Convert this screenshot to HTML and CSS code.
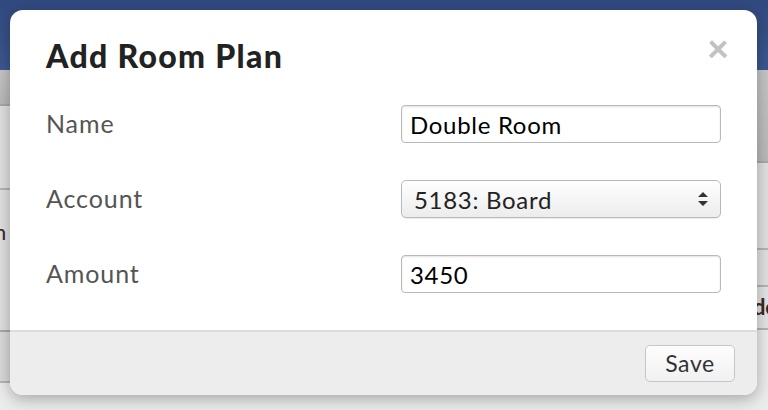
FILE: index.html
```html
<!DOCTYPE html>
<html lang="en">
<head>
  <meta charset="UTF-8">
  <title>Add Room Plan</title>
  <link rel="stylesheet" href="styles.css">
</head>
<body>
  <div class="page">
    <div class="topbar"></div>
    <div class="content">
      <div class="sidebar">
        <div class="toolbar short"></div>
        <div class="row r1"></div>
        <div class="row r2"><span class="cell-text">n</span></div>
        <div class="row r3"></div>
      </div>
      <div class="main">
        <div class="toolbar tall"></div>
        <div class="row m1"></div>
        <div class="row m2"></div>
        <div class="row m3"><span class="cell-text">do</span></div>
      </div>
    </div>
  </div>

  <div class="modal">
    <div class="modal-header">
      <h2>Add Room Plan</h2>
      <span class="close">&times;</span>
    </div>
    <form class="modal-body">
      <label for="name">Name</label>
      <input type="text" id="name" value="Double Room">

      <label for="account">Account</label>
      <div class="select-wrap">
        <select id="account">
          <option>5183: Board</option>
        </select>
        <svg class="arrows" width="12" height="16" viewBox="0 0 12 16">
          <path d="M6 1 L11 6 L1 6 Z M6 15 L11 10 L1 10 Z" fill="#333"/>
        </svg>
      </div>

      <label for="amount">Amount</label>
      <input type="text" id="amount" value="3450">
    </form>
    <div class="modal-footer">
      <button type="button">Save</button>
    </div>
  </div>
</body>
</html>
```

FILE: styles.css
```css
body {
  margin: 0;
  font-family: 'Lato', 'Open Sans', sans-serif;
  width: 768px;
  height: 410px;
  overflow: hidden;
  position: relative;
  background: #ececec;
}
.page {
  height: 410px;
}
.topbar {
  height: 70px;
  background: linear-gradient(#30497f, #3d5891);
}
.content {
  display: flex;
}
.sidebar {
  width: 200px;
}
.main {
  flex: 1;
}
.toolbar {
  background: linear-gradient(#c6c6c6, #b9b9b9);
  border-bottom: 2px solid #a9a9a9;
}
.toolbar.short {
  height: 34px;
}
.toolbar.tall {
  height: 91px;
}
.row {
  background: #e1e1e1;
  border-bottom: 2px solid #b4b4b4;
  position: relative;
}
.r1 { height: 82px; }
.r2 { height: 140px; border-bottom-color: #a8a8a8; }
.r3 { height: 49px; background: #dadada; }
.m1 { height: 85px; }
.m2 { height: 35px; }
.m3 { height: 41px; background: #e4e4e4; }
.cell-text {
  position: absolute;
  font-size: 22px;
  color: #3a2a2a;
}
.sidebar .cell-text {
  top: 28px;
  left: -6px;
}
.main .cell-text {
  top: 6px;
  font-weight: bold;
  right: -10px;
}
.modal {
  position: absolute;
  left: 10px;
  top: 10px;
  width: 747px;
  height: 385px;
  background: #fff;
  border-radius: 13px;
  box-shadow: 0 4px 16px rgba(0, 0, 0, 0.3);
  display: flex;
  flex-direction: column;
  overflow: hidden;
}
.modal-header {
  display: flex;
  justify-content: space-between;
  align-items: flex-start;
  padding: 26px 28px 0 36px;
}
.modal-header h2 {
  margin: 0;
  font-size: 32px;
  line-height: 40px;
  font-weight: 900;
  letter-spacing: 1.3px;
  color: #222;
}
.close {
  font-size: 38px;
  line-height: 24px;
  font-weight: 900;
  color: #c2c2c2;
  margin-top: -1px;
}
.modal-body {
  flex: 1;
  display: grid;
  grid-template-columns: 1fr 320px;
  grid-auto-rows: 38px;
  row-gap: 37px;
  align-items: center;
  padding: 29px 36px 0 36px;
}
label {
  font-size: 25px;
  letter-spacing: 0.9px;
  color: #555;
  margin-top: -3px;
}
input, select {
  box-sizing: border-box;
  width: 320px;
  height: 38px;
  font-family: 'Lato', 'Open Sans', sans-serif;
  font-size: 24px;
  letter-spacing: 0.7px;
  color: #000;
  border: 1px solid #b9b9b9;
  border-radius: 4px;
  padding: 0 8px;
  margin: 0;
  box-shadow: inset 0 1px 2px rgba(0, 0, 0, 0.12);
  outline: none;
}
.select-wrap {
  position: relative;
  height: 38px;
}
select {
  appearance: none;
  -webkit-appearance: none;
  background: linear-gradient(#ffffff, #ececec);
  border-radius: 5px;
  padding: 0 12px;
  color: #222;
  box-shadow: 0 1px 1px rgba(0, 0, 0, 0.08);
}
.arrows {
  position: absolute;
  right: 12px;
  top: 11px;
}
.modal-footer {
  height: 63px;
  background: #ededed;
  border-top: 2px solid #dcdcdc;
  display: flex;
  align-items: center;
  justify-content: flex-end;
  padding-right: 22px;
}
button {
  width: 90px;
  height: 37px;
  font-family: 'Lato', 'Open Sans', sans-serif;
  font-size: 23px;
  letter-spacing: 0.6px;
  color: #333;
  background: linear-gradient(#fdfdfd, #f1f1f1);
  border: 1px solid #c6c6c6;
  border-radius: 5px;
  padding: 0 0 2px;
}
```
